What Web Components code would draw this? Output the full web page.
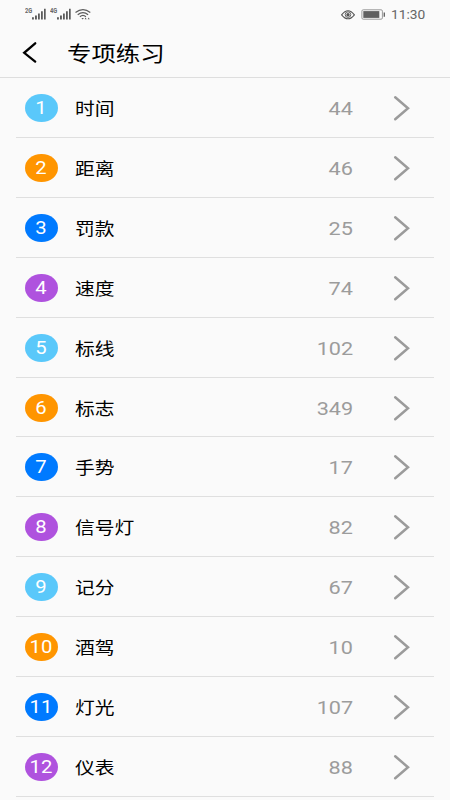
<!DOCTYPE html>
<html lang="zh-CN">
<head>
<meta charset="utf-8">
<title>专项练习</title>
<style>
html,body{margin:0;height:800px;overflow:hidden;background:#fafafa}
</style>
</head>
<body>
<practice-screen></practice-screen>
<script>
class StatusBar extends HTMLElement {
  constructor() {
    super();
    const signal = '<svg width="14" height="12" viewBox="0 0 14 12" fill="#5c5c5c"><path d="M0 9.2h1.9v2.3H0zM3 7.4h1.9v4.1H3zM6 5.4h1.8v6.1H6zM9 3.2h1.8v8.3H9zM12 .7h1.7v10.8H12z"/></svg>';
    this.attachShadow({mode: 'open'}).innerHTML = `
<style>
:host{display:flex;height:29px;box-sizing:border-box;padding:8px 25px 0 25px;color:#666;font-family:Roboto,sans-serif}
svg{display:block;flex:none}
.net{display:flex;width:25px}
.net span{font-size:7px;line-height:7px;font-weight:700;width:7px;white-space:nowrap;transform:scaleX(.82);transform-origin:0 50%}
.wifi{margin-top:1px}
.eye{margin:2px 6px 0 auto}
.battery{margin:1px 5px 0 0}
.time{width:34px;font-size:12.2px;line-height:14px;white-space:nowrap}
.time span{display:inline-block;transform:scaleX(1.13);transform-origin:0 50%}
</style>
<div class="net"><span>2G</span>${signal}</div>
<div class="net"><span>4G</span>${signal}</div>
<svg class="wifi" width="16" height="11" viewBox="0 0 16 11" fill="none" stroke="#5c5c5c" stroke-width="1.2"><path d="M.5 3.5Q8-2.2 15.3 3.5M2.7 5.7Q8 1.5 13.1 5.7M4.9 7.8Q8 5 10.9 7.8"/><path d="M6.4 9h2.5L7.6 10.4zM10.5 8.5l1.2 1.8h-2zM13.7 8.5l1 1.8h-2z" fill="#5c5c5c" stroke="none"/></svg>
<svg class="eye" width="14" height="10" viewBox="0 0 14 10" fill="none" stroke="#555"><path d="M.6 4.8Q7-3.4 13.4 4.8Q7 12.8.6 4.8z" stroke-width="1.1"/><circle cx="7" cy="4.6" r="2.8" stroke-width=".9"/><circle cx="7" cy="4.8" r="1.7" fill="#555" stroke="none"/></svg>
<svg class="battery" width="25" height="11" viewBox="0 0 25 11"><rect x=".9" y=".8" width="20.5" height="9.4" rx="1.3" fill="none" stroke="#999" stroke-width="1"/><path d="M2.3 2.1h16v6.8h-16z" fill="#606060"/><path d="M22.6 3.4H24v4.4h-1.4z" fill="#666"/></svg>
<div class="time"><span>11:30</span></div>`;
  }
}
customElements.define('status-bar', StatusBar);

class PageHeader extends HTMLElement {
  constructor() {
    super();
    this.attachShadow({mode: 'open'}).innerHTML = `
<style>
:host{display:flex;height:49.2px;box-sizing:border-box;padding:0 0 0 22px;border-bottom:1px solid #dedede;color:#000;font:21px/51px Roboto,"Noto Sans CJK SC",sans-serif}
svg{margin-top:13px;flex:none}
.title{margin-left:28.5px;display:block;height:48px;white-space:nowrap;transform:scaleX(1.163);transform-origin:0 50%}
</style>
<svg width="16" height="22" viewBox="0 0 16 22" fill="none" stroke="#000" stroke-width="2.3" stroke-linecap="round"><path d="M13.2 1.3L2.2 10.8L13.2 19.6"/></svg>
<span class="title"><slot></slot></span>`;
  }
}
customElements.define('page-header', PageHeader);

class NumberBadge extends HTMLElement {
  constructor() {
    super();
    this.attachShadow({mode: 'open'}).innerHTML = `
<style>
:host{display:flex;align-items:center;justify-content:center;width:32.5px;height:28px;border-radius:50%;flex:none;color:#fff;background:var(--badge);font:17.6px/30px Roboto,sans-serif}
span{display:block;transform:scaleX(1.15)}
</style><span><slot></slot></span>`;
  }
}
customElements.define('number-badge', NumberBadge);

class PracticeRow extends HTMLElement {
  constructor() {
    super();
    this.attachShadow({mode: 'open'}).innerHTML = `
<style>
:host{display:flex;align-items:center;height:59.88px;box-sizing:border-box;margin:0 16px;padding:1px 24px 0 9px;border-bottom:1px solid #dfdfdf}
.name{display:block;margin-left:17.5px;font:17px/28px "Noto Sans CJK SC",sans-serif;color:#000;transform:scaleX(1.163);transform-origin:0 50%;white-space:nowrap}
.count{display:block;margin-left:auto;font:18.5px/28px Roboto,sans-serif;color:#9c9c9c;transform:scaleX(1.17);transform-origin:100% 50%;position:relative;top:1px}
svg{margin-left:39px;flex:none}
</style>
<number-badge><slot name="index"></slot></number-badge>
<span class="name"><slot></slot></span>
<span class="count"><slot name="count"></slot></span>
<svg width="18" height="26" viewBox="0 0 18 26" fill="none" stroke="#9b9b9b" stroke-width="2.5" stroke-linecap="round"><path d="M3.2 2.2L16 13.3L3.2 24.2"/></svg>`;
  }
}
customElements.define('practice-row', PracticeRow);

class PracticeScreen extends HTMLElement {
  constructor() {
    super();
    const colors = ['#5ac8fa', '#ff9500', '#007aff', '#af52de'];
    const topics = [['时间', 44], ['距离', 46], ['罚款', 25], ['速度', 74], ['标线', 102], ['标志', 349], ['手势', 17], ['信号灯', 82], ['记分', 67], ['酒驾', 10], ['灯光', 107], ['仪表', 88]];
    this.attachShadow({mode: 'open'}).innerHTML = `
<style>:host{display:block;width:450px;height:800px;overflow:hidden;background:#fafafa}</style>
<status-bar></status-bar>
<page-header>专项练习</page-header>
<main>${topics.map(([name, count], i) => `<practice-row style="--badge:${colors[i % 4]}"><span slot="index">${i + 1}</span>${name}<span slot="count">${count}</span></practice-row>`).join('')}</main>`;
  }
}
customElements.define('practice-screen', PracticeScreen);
</script>
</body>
</html>
